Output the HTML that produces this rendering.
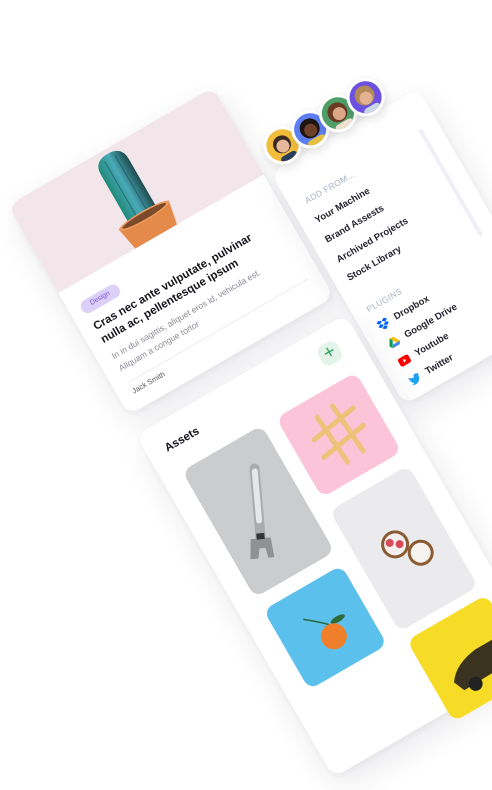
<!DOCTYPE html>
<html><head><meta charset="utf-8">
<style>
html,body{margin:0;padding:0;background:#fff;width:492px;height:790px;overflow:hidden;}
body{position:relative;font-family:"Liberation Sans",sans-serif;}
#w{position:absolute;left:0;top:0;width:1px;height:1px;transform-origin:0 0;transform:rotate(-30deg);}
.p{position:absolute;background:#fff;border-radius:12px;box-shadow:0 12px 30px rgba(40,40,70,0.10),0 2px 6px rgba(40,40,70,0.05);}
.a{position:absolute;white-space:nowrap;}
.img{position:absolute;border-radius:10px;overflow:hidden;}
.av{position:absolute;width:32px;height:32px;border-radius:50%;border:3px solid #fff;overflow:hidden;box-shadow:0 4px 10px rgba(0,0,0,0.12);}
.mi{font-size:9.5px;font-weight:bold;color:#23232e;}
</style></head><body>
<div id="w">
  <div class="p" style="left:-96px;top:182px;width:237px;height:242px;overflow:hidden;">
    <div style="position:absolute;left:0;top:0;width:237px;height:101px;background:#f2e6ea;">
      <svg width="237" height="101" style="position:absolute;left:0;top:0">
        <defs><linearGradient id="cg" x1="0" x2="1"><stop offset="0" stop-color="#1f8a7a"/><stop offset="0.5" stop-color="#4aa9b8"/><stop offset="1" stop-color="#1d4a4e"/></linearGradient></defs>
        <path d="M96 80 L96 20 Q96 5 112 5 Q128 5 128 20 L128 80 Z" fill="url(#cg)"/>
        <path d="M106 10 L106 76 M118 10 L118 76" stroke="#174a4a" stroke-width="1.2" opacity=".5"/>
        <path d="M84 76 L142 76 L137 101 L89 101 Z" fill="#e48a4a"/>
        <ellipse cx="113" cy="77" rx="29" ry="5" fill="#ee9c5e"/>
        <ellipse cx="113" cy="77" rx="25" ry="3.5" fill="#7a4a2a"/>
      </svg>
    </div>
    <div class="a" style="left:12px;top:120px;width:43px;height:14px;border-radius:7px;background:#dcd0f8;color:#7a55e0;font-size:7px;line-height:14px;text-align:center;">Design</div>
    <div class="a" style="left:14px;top:142px;font-size:11.5px;font-weight:bold;line-height:15px;color:#14141c;">Cras nec ante vulputate, pulvinar<br>nulla ac, pellentesque ipsum</div>
    <div class="a" style="left:15px;top:176px;font-size:8.6px;line-height:14px;color:#8a8a96;">In in dui sagittis, aliquet eros id, vehicula est.<br>Aliquam a congue tortor</div>
    <div style="position:absolute;left:15px;top:213px;width:208px;height:1px;background:#ececf0;"></div>
    <div class="a" style="left:15px;top:219px;font-size:7.5px;color:#55555f;">Jack Smith</div>
  </div>

  <div class="p" style="left:148px;top:285px;width:170px;height:268px;">
    <div style="position:absolute;left:149px;top:37px;width:4px;height:123px;border-radius:2px;background:#eef0f6;"></div>
    <div class="a" style="left:16px;top:37px;font-size:8.5px;color:#a9b0c2;letter-spacing:.3px;">ADD FROM...</div>
    <div class="a mi" style="left:15px;top:59px;">Your Machine</div>
    <div class="a mi" style="left:14px;top:81px;">Brand Assests</div>
    <div class="a mi" style="left:14px;top:104px;">Archived Projects</div>
    <div class="a mi" style="left:14px;top:125px;">Stock Library</div>
    <div class="a" style="left:15px;top:162px;font-size:8.5px;color:#a9b0c2;letter-spacing:.3px;">PLUGINS</div>
    <div class="a mi" style="left:35px;top:182px;">Dropbox</div>
    <div class="a mi" style="left:35px;top:203px;">Google Drive</div>
    <div class="a mi" style="left:35px;top:224px;">Youtube</div>
    <div class="a mi" style="left:35px;top:245px;">Twitter</div>
    <svg class="a" style="left:16px;top:182px" width="12" height="11" viewBox="0 0 12 11"><path d="M3 0 L6 2 L3 4 L0 2Z M9 0 L12 2 L9 4 L6 2Z M3 4 L6 6 L3 8 L0 6Z M9 4 L12 6 L9 8 L6 6Z M6 7 L9 9 L6 11 L3 9Z" fill="#0061fe"/></svg>
    <svg class="a" style="left:16px;top:203px" width="12" height="11" viewBox="0 0 12 11"><path d="M4 0 L8 0 L12 7 L10 10Z" fill="#fbbc04"/><path d="M4 0 L0 7 L2 10 L6 3Z" fill="#0f9d58"/><path d="M2 10 L10 10 L12 7 L4 7Z" fill="#4285f4"/></svg>
    <svg class="a" style="left:16px;top:225px" width="12" height="9" viewBox="0 0 12 9"><rect width="12" height="9" rx="2.5" fill="#f00"/><path d="M5 2.5 L8 4.5 L5 6.5Z" fill="#fff"/></svg>
    <svg class="a" style="left:16px;top:246px" width="12" height="10" viewBox="0 0 24 20"><path d="M24 2.4a10 10 0 0 1-2.8.8A5 5 0 0 0 23.3.4a10 10 0 0 1-3.1 1.2A4.9 4.9 0 0 0 11.8 6 14 14 0 0 1 1.7.9a4.9 4.9 0 0 0 1.5 6.6A4.9 4.9 0 0 1 1 6.9a4.9 4.9 0 0 0 3.9 4.8 5 5 0 0 1-2.2.1 4.9 4.9 0 0 0 4.6 3.4A9.9 9.9 0 0 1 0 17.3 14 14 0 0 0 7.5 19.5c9.1 0 14-7.5 14-14v-.6A10 10 0 0 0 24 2.4z" fill="#1da1f2"/></svg>
  </div>

  <div class="av" style="left:153px;top:248px;background:#f2bd3b;"><svg width="32" height="32"><circle cx="16" cy="15" r="9" fill="#3a2a22"/><circle cx="16" cy="17" r="6.5" fill="#e8b89a"/><rect x="7" y="26" width="18" height="8" rx="4" fill="#2b3d5c"/></svg></div>
  <div class="av" style="left:185px;top:248px;background:#5d7ef0;"><svg width="32" height="32"><circle cx="16" cy="15" r="10" fill="#1e1410"/><circle cx="16" cy="17" r="6.5" fill="#6e4028"/><rect x="6" y="26" width="20" height="8" rx="4" fill="#e8c040"/></svg></div>
  <div class="av" style="left:217px;top:248px;background:#4f9f69;"><svg width="32" height="32"><circle cx="16" cy="15" r="10" fill="#6a3a22"/><circle cx="17" cy="17" r="6.5" fill="#dca689"/><rect x="6" y="26" width="20" height="8" rx="4" fill="#f0e0d0"/></svg></div>
  <div class="av" style="left:249px;top:248px;background:#6b50e2;"><svg width="32" height="32"><circle cx="16" cy="14" r="10" fill="#b38a5a"/><circle cx="16" cy="17" r="6.5" fill="#e2b291"/><rect x="7" y="26" width="18" height="8" rx="4" fill="#c9d6e6"/></svg></div>

  <div class="p" style="left:-100px;top:445px;width:242px;height:395px;">
    <div class="a" style="left:19px;top:21px;font-size:11.5px;font-weight:bold;color:#14141c;">Assets</div>
    <div style="position:absolute;left:198px;top:15px;width:22px;height:22px;border-radius:8px;background:#e5f4ea;color:#3aa765;font-size:20px;line-height:21px;text-align:center;">+</div>
    <div class="img" style="left:22px;top:54px;width:92px;height:146px;background:#cbcccd;">
      <svg width="92" height="146"><g transform="rotate(25 46 73)"><rect x="41" y="25" width="10" height="80" rx="5" fill="#a9abad"/><rect x="43" y="30" width="6" height="55" rx="3" fill="#e6e7e8"/><path d="M36 100 L56 100 L58 120 L52 120 L50 110 L44 110 L42 120 L34 120Z" fill="#8f9194"/><rect x="42" y="95" width="8" height="6" fill="#333"/></g></svg>
    </div>
    <div class="img" style="left:130px;top:55px;width:92px;height:92px;background:#fbc4d8;">
      <svg width="92" height="92"><g stroke="#efc27a" stroke-width="5" stroke-linecap="round"><line x1="22" y1="38" x2="72" y2="30"/><line x1="22" y1="58" x2="72" y2="50"/><line x1="36" y1="20" x2="40" y2="74"/><line x1="55" y1="18" x2="59" y2="72"/></g></svg>
    </div>
    <div class="img" style="left:23px;top:215px;width:90px;height:92px;background:#5cc0ec;">
      <svg width="90" height="92"><path d="M30 28 Q45 40 52 48" stroke="#2a6a3a" stroke-width="1.5" fill="none"/><ellipse cx="60" cy="45" rx="8" ry="3" fill="#2f6b3a"/><circle cx="48" cy="58" r="13" fill="#ef7f2a"/></svg>
    </div>
    <div class="img" style="left:130px;top:162px;width:91px;height:140px;background:#ebebed;">
      <svg width="91" height="140"><circle cx="40" cy="62" r="14" fill="#8a5a33"/><circle cx="40" cy="62" r="11" fill="#f4eeee"/><circle cx="36" cy="58" r="4" fill="#d84a5a"/><circle cx="44" cy="64" r="4" fill="#d84a5a"/><circle cx="58" cy="82" r="13" fill="#8a5a33"/><circle cx="58" cy="82" r="10" fill="#f6f2ee"/></svg>
    </div>
    <div class="img" style="left:132px;top:313px;width:92px;height:94px;background:#f6dc27;">
      <svg width="92" height="94"><path d="M20 60 Q30 45 55 42 L80 42 L92 50 L92 70 L25 72Z" fill="#3a3320"/><circle cx="38" cy="72" r="7" fill="#222"/></svg>
    </div>
  </div>
</div>
</body></html>
